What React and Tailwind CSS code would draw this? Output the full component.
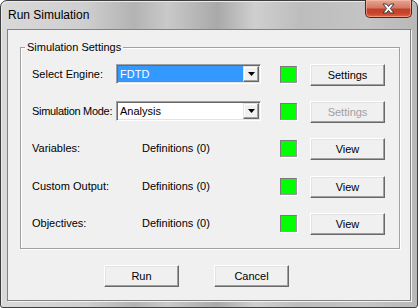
function RaisedButton({ children, disabled }) {
  return (
    <button
      className={
        "w-[75px] h-[22px] bg-[#f0f0f0] border border-t-white border-l-white border-r-[#696969] border-b-[#696969] shadow-[inset_-1px_-1px_0_#a0a0a0,inset_1px_1px_0_#e3e3e3] text-[11px] leading-[13px] " +
        (disabled ? "text-[#a0a0a0]" : "text-black")
      }
    >
      {children}
    </button>
  );
}

function Combo({ value, selected }) {
  return (
    <div className="w-[145px] h-[20px] flex border border-t-[#a0a0a0] border-l-[#a0a0a0] border-r-white border-b-white bg-white shadow-[inset_1px_1px_0_#696969,inset_-1px_-1px_0_#e3e3e3] p-[1px]">
      <div
        className={
          "flex-1 flex items-center pl-[2px] text-[11px] leading-[13px] " +
          (selected ? "bg-[#3399ff] text-white" : "bg-white text-black")
        }
      >
        {value}
      </div>
      <div className="w-[16px] h-[16px] flex items-center justify-center bg-[#f0f0f0] border border-t-[#e3e3e3] border-l-[#e3e3e3] border-r-[#696969] border-b-[#696969] shadow-[inset_-1px_-1px_0_#a0a0a0,inset_1px_1px_0_#fff]">
        <svg width="7" height="4" viewBox="0 0 7 4">
          <path d="M0 0 L7 0 L3.5 4 Z" fill="#000" />
        </svg>
      </div>
    </div>
  );
}

function Status() {
  return (
    <div className="w-[17px] h-[17px] border border-t-[#7a7a7a] border-l-[#7a7a7a] border-r-[#9a9a9a] border-b-[#9a9a9a] bg-[#00ff00] shadow-[1px_1px_0_#fff]" />
  );
}

function Row({ label, children, button, disabled, extra, tight }) {
  return (
    <div className={"flex items-center h-[22px] " + (extra || "")}>
      <div
        className={
          "w-[84px] flex-none whitespace-nowrap text-[11px] leading-[13px] text-black " +
          (tight ? "tracking-[-0.3px]" : "")
        }
      >
        {label}
      </div>
      <div className="w-[145px] flex-none flex items-center">{children}</div>
      <div className="ml-[19px]">
        <Status />
      </div>
      <div className="ml-[13px]">
        <RaisedButton disabled={disabled}>{button}</RaisedButton>
      </div>
    </div>
  );
}

export default function App() {
  return (
    <div
      className="w-[418px] h-[308px] flex flex-col rounded-t-[7px] rounded-b-[3px] border border-[#3e3e3e] bg-[linear-gradient(90deg,#d9d9d9_0%,#cfcfcf_20%,#b3b3b3_32%,#c9c9c9_40%,#a9a9a9_52%,#cfcfcf_61%,#bdbdbd_72%,#c4c4c4_88%,#b8b8b8_100%)] shadow-[inset_1px_1px_0_#eaeaea]"
      style={{ fontFamily: '"Liberation Sans", Arial, sans-serif' }}
    >
      <div className="h-[28px] flex items-start justify-between pl-[7px] pr-[5px]">
        <div className="pt-[7px] text-[12px] leading-[14px] text-black">Run Simulation</div>
        <div className="w-[47px] h-[18px] -mt-[1px] flex items-center justify-center rounded-b-[5px] border border-[#5c2216] border-t-0 bg-[linear-gradient(180deg,#e6a593_0%,#d47a63_45%,#c0402a_55%,#c9462c_80%,#e0694a_100%)] shadow-[inset_0_0_0_1px_rgba(255,200,180,0.5)]">
          <svg width="13" height="11" viewBox="0 0 13 11">
            <path
              d="M1 1 L4.5 1 L6.5 3.6 L8.5 1 L12 1 L8.4 5.5 L12 10 L8.5 10 L6.5 7.4 L4.5 10 L1 10 L4.6 5.5 Z"
              fill="#fff"
              stroke="#3a3a3a"
              strokeWidth="1"
              strokeLinejoin="round"
            />
          </svg>
        </div>
      </div>
      <div className="ml-[6px] w-[404px] h-[272px] bg-[#f0f0f0] border border-[#7f8383] shadow-[1px_1px_0_#f4f4f4] flex flex-col">
        <fieldset className="ml-[12px] mt-[11px] w-[380px] border border-[#a0a0a0] shadow-[inset_1px_1px_0_#fff,1px_1px_0_#fff] p-0 m-0">
          <legend className="ml-[4px] px-[2px] bg-[#f0f0f0] text-[11px] leading-[13px] text-black">
            Simulation Settings
          </legend>
          <div className="pt-[9px] pl-[11px] pb-[14px] flex flex-col gap-[15px]">
            <Row label="Select Engine:" button="Settings">
              <Combo value="FDTD" selected />
            </Row>
            <Row label="Simulation Mode:" button="Settings" disabled tight>
              <Combo value="Analysis" />
            </Row>
            <Row label="Variables:" button="View">
              <span className="pl-[26px] text-[11px] leading-[13px]">Definitions (0)</span>
            </Row>
            <Row label="Custom Output:" button="View" extra="mt-[1px]">
              <span className="pl-[26px] text-[11px] leading-[13px]">Definitions (0)</span>
            </Row>
            <Row label="Objectives:" button="View">
              <span className="pl-[26px] text-[11px] leading-[13px]">Definitions (0)</span>
            </Row>
          </div>
        </fieldset>
        <div className="mt-[16px] pl-[96px] flex gap-[35px]">
          <RaisedButton>Run</RaisedButton>
          <RaisedButton>Cancel</RaisedButton>
        </div>
      </div>
    </div>
  );
}
